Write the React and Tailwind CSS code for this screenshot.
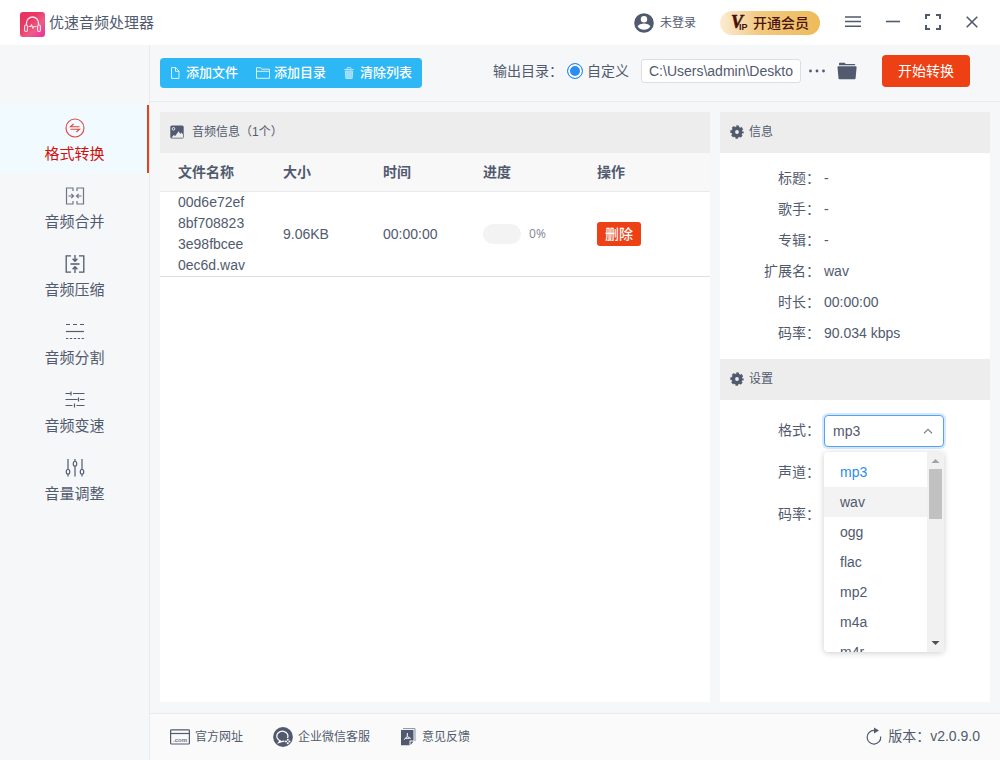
import React, { useState } from 'react';

const Logo = () => (
  <svg viewBox="0 0 25 25" width={25} height={25} fill="none">
    <defs>
      <linearGradient id="logoBg" x1="0" y1="0" x2="1" y2="1">
        <stop offset="0" stopColor="#e8315f" />
        <stop offset="0.35" stopColor="#ea3764" />
        <stop offset="0.65" stopColor="#ee5c86" />
        <stop offset="1" stopColor="#ea2aa6" />
      </linearGradient>
    </defs>
    <rect width="25" height="25" rx="3" fill="url(#logoBg)" />
    <path d="M6.5 13v-2a6 6 0 0 1 12 0v2" stroke="#ffe3ea" strokeWidth="1.3" />
    <rect x="4.6" y="13" width="2.8" height="6.5" rx="1.2" stroke="#ffe3ea" strokeWidth="1.1" />
    <rect x="17.6" y="13" width="2.8" height="6.5" rx="1.2" stroke="#ffe3ea" strokeWidth="1.1" />
    <path d="M8.5 14.5h2l1-1.5 1.5 3 1.2-1.5h2.3" stroke="#ffe3ea" strokeWidth="1.2" />
  </svg>
);

const UserIcon = () => (
  <svg viewBox="0 0 20 20" width={20} height={20}>
    <circle cx="10" cy="10" r="9.8" fill="#515a6e" />
    <circle cx="10" cy="6.3" r="3.2" fill="#fff" />
    <path d="M3.7 13.6c1-2.3 3.6-3 6.3-3s5.3.7 6.3 3c-1.5 2.2-3.7 3.2-6.3 3.2s-4.8-1-6.3-3.2z" fill="#fff" />
  </svg>
);

const MenuIcon = () => (
  <svg viewBox="0 0 16 12" width={16} height={12} stroke="#515a6e" strokeWidth="1.6">
    <path d="M0 1h16M0 5.5h16M0 10.3h16" />
  </svg>
);

const MinusIcon = () => (
  <svg viewBox="0 0 14 12" width={14} height={12} stroke="#515a6e" strokeWidth="1.6">
    <path d="M0 5.5h14" />
  </svg>
);

const ExpandIcon = () => (
  <svg viewBox="0 0 16 16" width={16} height={16} fill="none" stroke="#515a6e" strokeWidth="2">
    <path d="M1 5V1h4M11 1h4v4M15 11v4h-4M5 15H1v-4" />
  </svg>
);

const CloseIcon = () => (
  <svg viewBox="0 0 12 12" width={12} height={12} stroke="#515a6e" strokeWidth="1.6">
    <path d="M.7.7l10.6 10.6M11.3.7L.7 11.3" />
  </svg>
);

// Sidebar icons, all drawn in a 20x20 box
const ConvertIcon = () => (
  <svg viewBox="0 0 20 20" width={20} height={20} fill="none" stroke="#e0463f">
    <circle cx="10" cy="10" r="9" strokeWidth="1.1" />
    <path d="M14.5 8.8h-9L8.600 6M5.500 11.200h9L11.400 14" strokeWidth="1.1" />
  </svg>
);

const MergeIcon = () => (
  <svg viewBox="0 0 20 20" width={20} height={20} fill="none" stroke="#6d7587" strokeWidth="1.2">
    <path d="M8 5V2H1.5v16H8v-3M12 5V2h6.5v16H12v-3" />
    <path d="M3.5 10h4.8M6.3 7.8L8.5 10l-2.200 2.200M16.500 10h-4.800M13.700 7.800L11.500 10l2.200 2.200" />
  </svg>
);

const CompressIcon = () => (
  <svg viewBox="0 0 20 20" width={20} height={20} fill="none" stroke="#515a6e" strokeWidth="1.3">
    <path d="M6 1.8H1.200v16.400H6M14 1.800h4.800v16.400H14" />
    <path d="M5.500 10h9M10 1v6M7.600 4.700L10 7.200l2.400-2.500M10 19v-6M7.600 15.300L10 12.800l2.400 2.500" />
  </svg>
);

const SplitIcon = () => (
  <svg viewBox="0 0 20 20" width={20} height={20} fill="none" stroke="#515a6e" strokeWidth="1.2">
    <path d="M1 2.500h18" strokeDasharray="4 3" />
    <path d="M1 9.500h18" />
    <path d="M1 16.500h18" strokeDasharray="2.300 1.600" />
  </svg>
);

const SpeedIcon = () => (
  <svg viewBox="0 0 20 20" width={20} height={20} fill="none" stroke="#515a6e" strokeWidth="1.2">
    <path d="M.5 3.500h5.500M8 3.500h11.500M6 1.500v4M.5 9.500h12M15 9.500h4.500M13.500 7.500v4M.5 15.500h7M11.500 15.500h8M9.500 13.500v4" />
  </svg>
);

const VolumeIcon = () => (
  <svg viewBox="0 0 20 20" width={20} height={20} fill="none" stroke="#515a6e" strokeWidth="1.2">
    <path d="M3 1v10.500M3 16v2.500M10 1v2.500M10 8v10.500M17 1v10.500M17 16v2.500" />
    <rect x="1.3" y="11.5" width="3.4" height="4.5" rx="1.6" />
    <rect x="8.3" y="3.5" width="3.4" height="4.5" rx="1.6" />
    <rect x="15.3" y="11.5" width="3.4" height="4.5" rx="1.6" />
  </svg>
);

// Toolbar icons
const FileIcon = () => (
  <svg viewBox="0 0 10 12" width={10} height={12} fill="none" stroke="#d8f2fe">
    <path d="M1.500.6h4.300L9 4v7.400H1.500zM5.500.6v3.700H9" />
  </svg>
);

const DirIcon = () => (
  <svg viewBox="0 0 14 12" width={14} height={12} fill="none" stroke="#d8f2fe">
    <path d="M.5 11.300V.7h4.300l1 1.500h7.700v9.100zM.5 4.300h13" />
  </svg>
);

const TrashIcon = () => (
  <svg viewBox="0 0 10 12" width={10} height={12} fill="none" stroke="#b5e5fc">
    <path d="M.3 2.500h9.400M3.200 2.300V.7h3.600v1.600" />
    <path d="M1.300 4h7.400l-.6 7.500H1.900z" fill="#8ed7fa" />
    <path d="M3.500 5v5.500M5 5v5.500M6.500 5v5.500" strokeWidth=".6" />
  </svg>
);

const FolderIcon = () => (
  <svg viewBox="0 0 20 18" width={20} height={18} fill="#515a6e">
    <path d="M2 3.300V1.600Q2 .8 2.800.8h4.700l1.300 1.300h8.700q.7 0 .7.700v.5z" />
    <path d="M1.300 4.300h17.400q1 0 .9 1l-1 11q-.1 1-1 1H2.500q-.9 0-1-1L.5 5.300q-.1-1 .8-1z" />
  </svg>
);

const ImageIcon = () => (
  <svg viewBox="0 0 14 14" width={14} height={14}>
    <rect x=".3" y=".5" width="13.4" height="13" rx="1.5" fill="#515a6e" />
    <circle cx="3.5" cy="3.8" r="1.3" fill="none" stroke="#ededed" />
    <path d="M1.500 12.700l2.200-2.800 1.500 1.200 3.500-4.800 1.500 2.600 1.400-1.500 1.400 2v3.300z" fill="#ededed" />
  </svg>
);

const GearIcon = () => (
  <svg viewBox="0 0 14 14" width={14} height={14}>
    <circle cx="7" cy="7" r="3.7" fill="none" stroke="#515a6e" strokeWidth="3.6" />
    <circle cx="7" cy="7" r="5.7" fill="none" stroke="#515a6e" strokeWidth="2" strokeDasharray="2.6 1.877" strokeDashoffset="1.3" />
  </svg>
);

// Footer icons
const SiteIcon = () => (
  <svg viewBox="0 0 20 16" width={20} height={16} fill="none" stroke="#515a6e" strokeWidth="1.2">
    <rect x=".6" y=".8" width="18.8" height="14.2" rx=".8" />
    <path d="M.6 4.500h18.800" />
    <text x="3" y="12.5" fontSize="6" fontWeight="bold" fill="#6d7587" stroke="none">.com</text>
  </svg>
);

const ServiceIcon = () => (
  <svg viewBox="0 0 20 20" width={20} height={20} fill="none">
    <circle cx="10" cy="10" r="9.9" fill="#515a6e" />
    <path d="M14.600 11A5.600 5 0 1 0 7.200 13.800L5.800 15.500l3.700-1.100 2-.2" stroke="#fff" strokeWidth="1.3" />
    <circle cx="14.8" cy="12.8" r="1" fill="#fff" />
    <circle cx="13" cy="14.5" r="1" fill="#fff" />
    <circle cx="16.5" cy="14.5" r="1" fill="#fff" />
    <circle cx="14.8" cy="16.2" r="1" fill="#fff" />
  </svg>
);

const FeedbackIcon = () => (
  <svg viewBox="0 0 16 18" width={16} height={18} fill="none">
    <path d="M3 .6h12v12.500" stroke="#8990a0" strokeWidth="1" />
    <path d="M1 2h12.500v10.500h-4v4.800H1z" fill="#515a6e" />
    <path d="M10.500 13.500h3l-3 3.500z" fill="#515a6e" />
    <path d="M7.300 5v3.500L4 11.600M7.300 8.500l3.500 2M5.500 10.300h4" stroke="#fff" strokeWidth="1" />
  </svg>
);

const RefreshIcon = () => (
  <svg viewBox="0 0 16 18" width={16} height={18} fill="none">
    <path d="M8.500 3.500A6.800 6.800 0 1 0 14.700 9.500" stroke="#515a6e" strokeWidth="1.2" />
    <path d="M8 .5l5 3-5 3z" fill="#515a6e" />
  </svg>
);

const menus = [
  { name: '格式转换', icon: ConvertIcon },
  { name: '音频合并', icon: MergeIcon },
  { name: '音频压缩', icon: CompressIcon },
  { name: '音频分割', icon: SplitIcon },
  { name: '音频变速', icon: SpeedIcon },
  { name: '音量调整', icon: VolumeIcon }
];

const info = [
  ['标题', '-'],
  ['歌手', '-'],
  ['专辑', '-'],
  ['扩展名', 'wav'],
  ['时长', '00:00:00'],
  ['码率', '90.034 kbps']
];

const files = [
  { name: '00d6e72ef8bf7088233e98fbcee0ec6d.wav', size: '9.06KB', time: '00:00:00', progress: 0 }
];

const formats = ['mp3', 'wav', 'ogg', 'flac', 'mp2', 'm4a', 'm4r'];

const Header = () => (
  <header className="flex h-[45px] shrink-0 items-center bg-white pr-[22px] pl-5">
    <div className="flex flex-1 items-center gap-1 pt-1">
      <Logo />
      <h1 className="pb-[2px] text-[15px]">优速音频处理器</h1>
    </div>
    <button className="flex items-center gap-[6px] text-xs">
      <UserIcon />
      未登录
    </button>
    <button className="ml-6 flex h-6 w-[100px] items-center justify-center gap-[2px] rounded-full bg-linear-to-r from-[#fbecd3] via-[#f1c97f] via-40% to-[#eebb58] text-sm font-medium text-[#4b1310]">
      <svg viewBox="0 0 20 24" width={20} height={24} fill="#4b0f0f" fontWeight="bold">
        <text x="0" y="17" fontSize="18" fontFamily="Liberation Serif" fontStyle="italic" stroke="#4b0f0f" strokeWidth=".6">
          V<tspan dx="-4" dy="2" fontSize="9" fontFamily="Liberation Sans" fontStyle="normal" strokeWidth="0">IP</tspan>
        </text>
      </svg>
      开通会员
    </button>
    <div className="ml-[25px] flex items-center gap-[25px] pb-[2px]">
      <button aria-label="菜单"><MenuIcon /></button>
      <button aria-label="最小化"><MinusIcon /></button>
      <button aria-label="最大化"><ExpandIcon /></button>
      <button aria-label="关闭"><CloseIcon /></button>
    </div>
  </header>
);

const Sidebar = () => {
  const [active, setActive] = useState(0);

  return (
    <nav className="w-[150px] shrink-0 border-r border-[#e8eaec] pt-[60px]">
      {menus.map(({ name, icon: Icon }, i) => (
        <button
          key={name}
          onClick={() => setActive(i)}
          className={`flex h-[68px] w-full flex-col items-center justify-center gap-1 border-r-2 pt-[6px] pl-[2px] text-[15px] leading-6 ${
            i === active ? 'border-[#ed4014] bg-[#f0faff] text-[#d2100c]' : 'border-transparent'
          }`}
        >
          <Icon />
          {name}
        </button>
      ))}
    </nav>
  );
};

const Toolbar = () => (
  <div className="flex h-[57px] shrink-0 items-center border-b border-[#e8eaec] pr-[30px] pl-[10px]">
    <div className="flex h-[30px] items-center gap-[18px] rounded bg-[#2db7f5] px-[10px] text-[13px] font-medium text-white">
      <button className="flex items-center gap-[6px]"><FileIcon />添加文件</button>
      <button className="flex items-center gap-1"><DirIcon />添加目录</button>
      <button className="flex items-center gap-[6px]"><TrashIcon />清除列表</button>
    </div>
    <div className="ml-auto flex items-center pb-1 text-sm">
      <span>输出目录：</span>
      <label className="ml-1 flex items-center gap-1">
        <input
          type="radio"
          name="output"
          defaultChecked
          className="size-4 appearance-none rounded-full border border-[#2d8cf0] bg-[#2d8cf0] shadow-[inset_0_0_0_2px_#fff]"
        />
        自定义
      </label>
      <input
        type="text"
        aria-label="输出目录"
        defaultValue="C:\Users\admin\Deskto"
        className="ml-3 h-6 w-[160px] rounded-[3px] border border-[#dcdee2] bg-white px-[7px]"
      />
      <button aria-label="更多" className="ml-2">
        <svg viewBox="0 0 16 4" width={16} height={4} fill="#515a6e">
          <circle cx="1.5" cy="2" r="1.4" />
          <circle cx="8" cy="2" r="1.4" />
          <circle cx="14.5" cy="2" r="1.4" />
        </svg>
      </button>
      <button aria-label="打开文件夹" className="ml-3"><FolderIcon /></button>
      <button className="ml-[25px] h-8 w-[88px] rounded bg-[#ed4014] text-white">开始转换</button>
    </div>
  </div>
);

const PanelTitle = ({ icon, className, children }) => (
  <h2 className={`flex h-[41px] items-center bg-[#ededed] px-[10px] pb-[2px] text-xs ${className}`}>
    {icon}
    {children}
  </h2>
);

const FileList = () => (
  <section className="min-w-0 flex-1 bg-white">
    <PanelTitle icon={<ImageIcon />} className="gap-2">音频信息（{files.length}个）</PanelTitle>
    <table className="w-full table-fixed text-left text-sm">
      <colgroup>
        <col className="w-[105px]" />
        <col className="w-[100px]" />
        <col className="w-[100px]" />
        <col className="w-[114px]" />
        <col />
      </colgroup>
      <thead>
        <tr className="h-[38px] border-b border-[#e8eaec] bg-[#f8f8f9]">
          <th className="px-[18px]">文件名称</th>
          <th className="px-[18px]">大小</th>
          <th className="px-[18px]">时间</th>
          <th className="px-[18px]">进度</th>
          <th className="px-[18px]">操作</th>
        </tr>
      </thead>
      <tbody>
        {files.map((file) => (
          <tr key={file.name} className="border-b border-[#dcdee2]">
            <td className="px-[18px] leading-[21px] break-all">{file.name}</td>
            <td className="px-[18px]">{file.size}</td>
            <td className="px-[18px]">{file.time}</td>
            <td className="px-[18px]">
              <div className="flex items-center gap-2">
                <div className="h-5 w-[38px] overflow-hidden rounded-full bg-[#f3f3f3]">
                  <div className="h-full bg-[#2db7f5]" style={{ width: `${file.progress}%` }} />
                </div>
                <span className="font-['Open_Sans'] text-xs text-[#808695]">{file.progress}%</span>
              </div>
            </td>
            <td className="px-[18px]">
              <button className="block h-6 w-11 rounded-[3px] bg-[#ed4014] font-medium text-white">删除</button>
            </td>
          </tr>
        ))}
      </tbody>
    </table>
  </section>
);

const FormatSelect = () => {
  const [format, setFormat] = useState('mp3');
  const [hover, setHover] = useState('wav');

  return (
    <div className="relative w-[120px]">
      <select
        id="format"
        value={format}
        onChange={(e) => setFormat(e.target.value)}
        className="block h-8 w-full appearance-none rounded border border-[#57a3f3] bg-white px-2 shadow-[0_0_0_2px_rgba(45,140,240,0.2)]"
      >
        {formats.map((f) => <option key={f}>{f}</option>)}
      </select>
      <svg viewBox="0 0 10 6" width={10} height={6} className="pointer-events-none absolute top-[13px] right-[11px]" fill="none" stroke="#808695" strokeWidth="1.3">
        <path d="M1 5.300l4-4 4 4" />
      </svg>
      {/* Open option list */}
      <div className="absolute top-[37px] left-0 z-10 flex h-[200px] w-full overflow-hidden rounded bg-white shadow-[0_1px_6px_rgba(0,0,0,0.2)]">
        <ul role="listbox" aria-label="格式" className="flex-1 py-[5px]">
          {formats.map((f) => (
            <li
              key={f}
              role="option"
              aria-selected={f === format}
              onClick={() => setFormat(f)}
              onMouseEnter={() => setHover(f)}
              className={`h-[30px] px-4 leading-[30px] ${f === hover ? 'bg-[#f3f3f3]' : ''} ${f === format ? 'text-[#2d8cf0]' : ''}`}
            >
              {f}
            </li>
          ))}
        </ul>
        <div className="flex w-[17px] flex-col items-center bg-[#f1f1f1]">
          <svg viewBox="0 0 17 17" width={17} height={17} fill="#a3a3a3"><path d="M8.500 7l4 4h-8z" /></svg>
          <div className="h-[50px] w-[13px] bg-[#c1c1c1]" />
          <svg viewBox="0 0 17 17" width={17} height={17} fill="#505050" className="mt-auto"><path d="M4.500 6h8l-4 4z" /></svg>
        </div>
      </div>
    </div>
  );
};

const SidePanel = () => (
  <aside className="w-[270px] shrink-0 bg-white text-sm">
    <PanelTitle icon={<GearIcon />} className="gap-[5px]">信息</PanelTitle>
    <dl className="pt-[9px] pb-[11px]">
      {info.map(([label, value]) => (
        <div key={label} className="flex h-[31px] items-center gap-1">
          <dt className="w-[100px] text-right">{label}：</dt>
          <dd>{value}</dd>
        </div>
      ))}
    </dl>
    <PanelTitle icon={<GearIcon />} className="gap-[5px]">设置</PanelTitle>
    <div className="space-y-[10px] pt-[15px]">
      <div className="flex h-8 items-center gap-1">
        <label htmlFor="format" className="w-[100px] pb-[2px] text-right">格式：</label>
        <FormatSelect />
      </div>
      <div className="flex h-8 items-center">
        <span className="w-[100px] pb-[2px] text-right">声道：</span>
      </div>
      <div className="flex h-8 items-center">
        <span className="w-[100px] pb-[2px] text-right">码率：</span>
      </div>
    </div>
  </aside>
);

const Footer = () => (
  <footer className="flex h-[47px] shrink-0 items-center border-t border-[#e8eaec] bg-[#fafafa] px-5 text-xs">
    <a href="#site" className="flex items-center gap-[5px]"><SiteIcon />官方网址</a>
    <a href="#service" className="ml-[30px] flex items-center gap-[5px]"><ServiceIcon />企业微信客服</a>
    <a href="#feedback" className="ml-[30px] flex items-center gap-[6px]"><FeedbackIcon />意见反馈</a>
    <button className="ml-auto flex items-center gap-[6px] pb-[2px] text-sm"><RefreshIcon />版本：v2.0.9.0</button>
  </footer>
);

export default function App() {
  return (
    <div className="flex min-h-screen flex-col bg-[#f5f7f9] font-['Liberation_Sans','Noto_Sans_CJK_SC',sans-serif] text-[#515a6e]">
      <Header />
      <div className="flex flex-1">
        <Sidebar />
        <main className="flex min-w-0 flex-1 flex-col">
          <Toolbar />
          <div className="flex flex-1 gap-[10px] px-[10px] pt-[10px] pb-[11px]">
            <FileList />
            <SidePanel />
          </div>
          <Footer />
        </main>
      </div>
    </div>
  );
}
